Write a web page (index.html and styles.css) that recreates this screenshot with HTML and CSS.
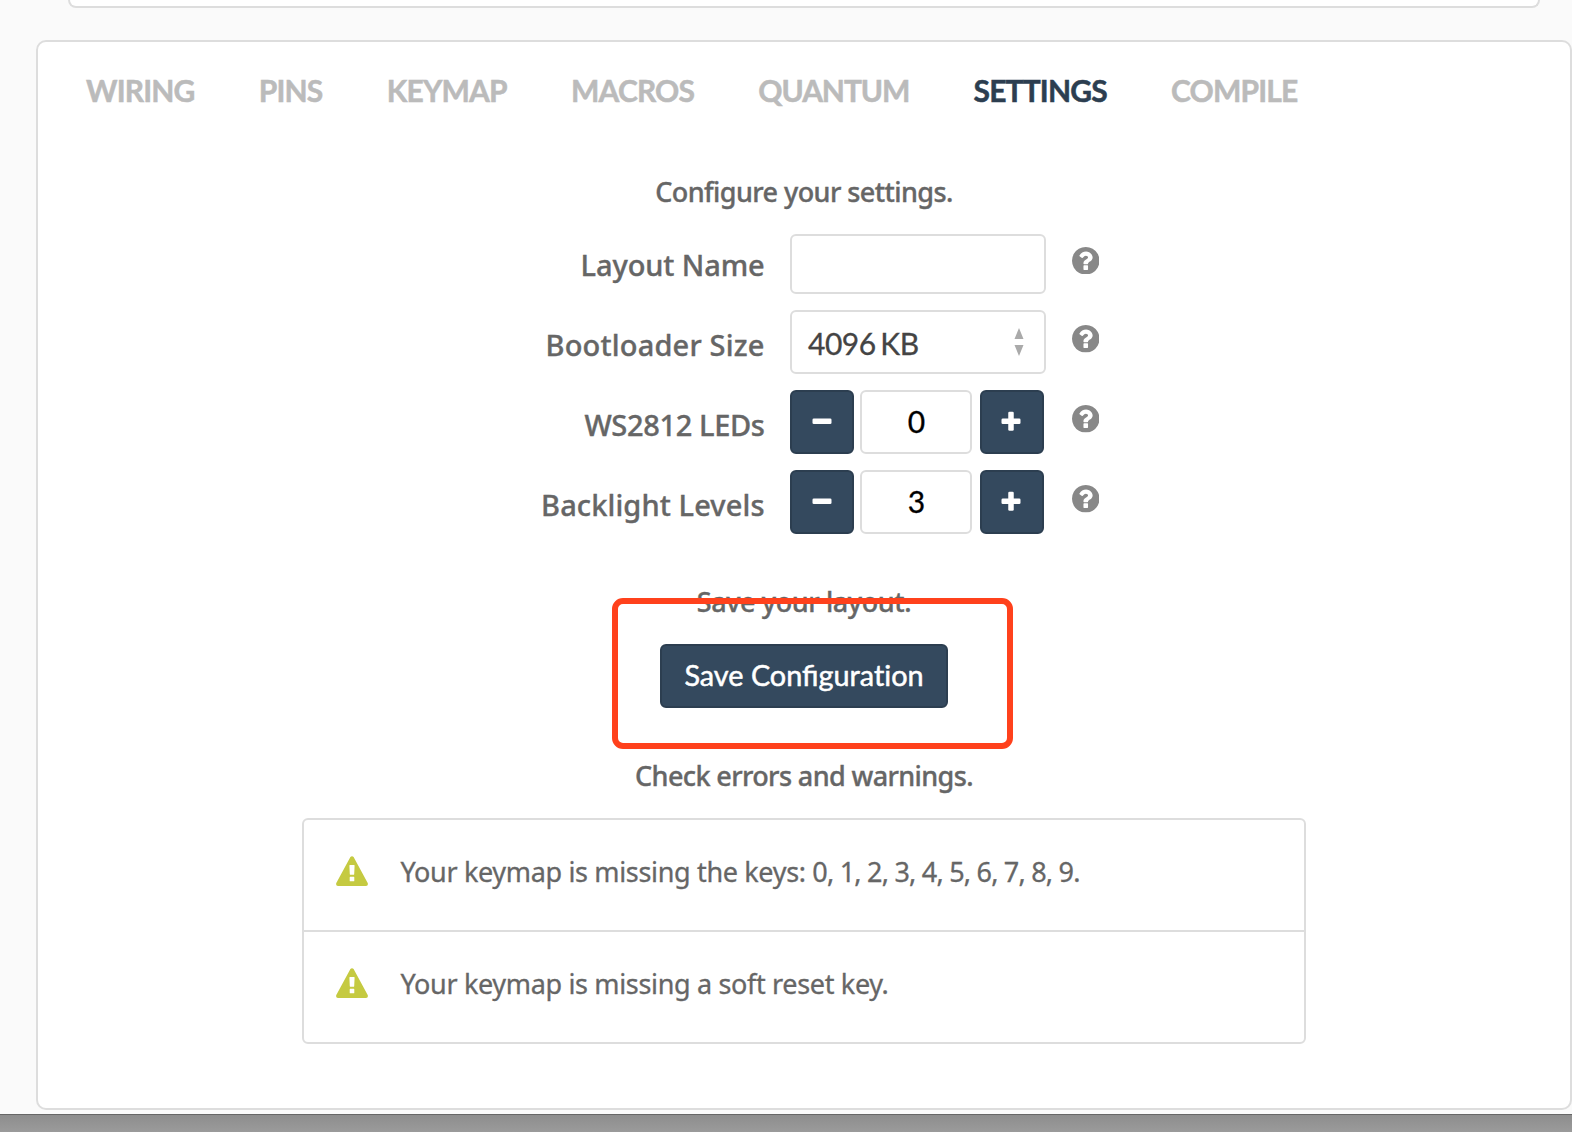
FILE: index.html
```html
<!DOCTYPE html>
<html lang="en">
<head>
<meta charset="utf-8">
<title>Keyboard settings</title>
<link rel="stylesheet" href="styles.css">
</head>
<body>
<svg class="defs" aria-hidden="true">
  <symbol id="help" viewBox="0 0 1536 1536"><path d="M896 1248v-192q0-14-9-23t-23-9h-192q-14 0-23 9t-9 23v192q0 14 9 23t23 9h192q14 0 23-9t9-23zm256-672q0-88-55.500-163t-138.500-116-170-41q-243 0-371 213-15 24 8 42l132 100q7 6 19 6 16 0 25-12 53-68 86-92 34-24 86-24 48 0 85.500 26t37.500 59q0 38-20 61t-68 45q-63 28-115.500 86.500t-52.500 125.500v36q0 14 9 23t23 9h192q14 0 23-9t9-23q0-19 21.500-49.500t54.500-49.500q32-18 49-28.500t46-35 44.500-48 28-60.500 12.500-81zm384 192q0 209-103 385.500t-279.500 279.500-385.500 103-385.500-103-279.500-279.500-103-385.500 103-385.500 279.500-279.500 385.500-103 385.500 103 279.500 279.500 103 385.500z"/></symbol>
  <symbol id="warn" viewBox="0 0 32 30"><path fill-rule="evenodd" d="M14.400 1Q16-.7 17.600 1L31.700 27Q32.500 29.600 30 30H2Q-.5 29.600.3 27ZM13.400 9.400 13.800 18.200Q13.900 18.700 14.500 18.700H17.500Q18.100 18.700 18.200 18.200L18.600 9.400Q18.600 8.900 18 8.900H14Q13.400 8.900 13.400 9.400ZM14.200 20.800Q13.700 20.800 13.700 21.400V24.800Q13.700 25.300 14.200 25.300H17.800Q18.300 25.300 18.300 24.800V21.400Q18.300 20.800 17.800 20.800Z"/></symbol>
  <symbol id="minus" viewBox="0 0 20 20"><rect x=".5" y="7.500" width="19" height="5.500" rx="1.300"/></symbol>
  <symbol id="plus" viewBox="0 0 20 20"><rect x=".5" y="7.500" width="19" height="5.500" rx="1.300"/><rect x="7.250" y=".7" width="5.500" height="19" rx="1.300"/></symbol>
</svg>
<div class="page">
  <section class="panel-above"></section>
  <main class="card">
    <nav class="tabs">
      <a>WIRING</a><a>PINS</a><a>KEYMAP</a><a>MACROS</a><a class="wide">QUANTUM</a><a class="active">SETTINGS</a><a>COMPILE</a>
    </nav>
    <h2 class="heading configure"><span>Configure your settings.</span></h2>
    <form class="form">
      <label class="first">Layout Name</label>
      <div class="field"></div>
      <svg class="help first-help"><use href="#help"/></svg>

      <label class="l-boot">Bootloader Size</label>
      <div class="field select"><span>4096 KB</span>
        <svg class="arrows" viewBox="0 0 10 28"><path d="M5 0 9.500 11H.5ZM5 28 9.500 17H.5Z"/></svg>
      </div>
      <svg class="help"><use href="#help"/></svg>

      <label class="l-led">WS2812 LEDs</label>
      <div class="stepper"><span class="btn"><svg><use href="#minus"/></svg></span><span class="field num">0</span><span class="btn plus"><svg><use href="#plus"/></svg></span></div>
      <svg class="help"><use href="#help"/></svg>

      <label class="l-back">Backlight Levels</label>
      <div class="stepper"><span class="btn"><svg><use href="#minus"/></svg></span><span class="field num">3</span><span class="btn plus"><svg><use href="#plus"/></svg></span></div>
      <svg class="help"><use href="#help"/></svg>
    </form>
    <h2 class="heading save"><span>Save your layout.</span></h2>
    <div class="btn save-btn"><span>Save Configurat&zwnj;ion</span></div>
    <h2 class="heading check"><span>Check errors and warnings.</span></h2>
    <ul class="alerts">
      <li><svg><use href="#warn"/></svg><span>Your keymap is missing the keys: <span class="digits">0, 1, 2, 3, 4, 5, 6, 7, 8, 9.</span></span></li>
      <li><svg><use href="#warn"/></svg><span>Your keymap is missing a soft reset key.</span></li>
    </ul>
  </main>
  <div class="highlight"></div>
  <footer class="edge"></footer>
</div>
</body>
</html>
```
FILE: styles.css
```css
* { box-sizing: border-box; }
body { margin: 0; background: #fafafa; color: #666; font-family: "Noto Sans", sans-serif; }
.defs { display: none; }
.page { position: relative; height: 1132px; overflow: hidden; display: flex; flex-direction: column; }
.panel-above { height: 8px; flex: none; margin: 0 32px 32px 68px; border: 2px solid #ddd; border-top: 0; border-radius: 0 0 8px 8px; background: #fff; }
.card { height: 1070px; flex: none; margin-left: 36px; border: 2px solid #ddd; border-radius: 10px; background: #fff; }
.tabs { display: flex; gap: 64.300px; height: 100px; padding: 0 48px 5px; align-items: center; font: 700 30px/36px Lato, sans-serif; letter-spacing: -.84px; color: #bbb; -webkit-text-stroke: .5px currentColor; }
.tabs .wide { letter-spacing: -1.1px; }
.tabs .active { color: #2c3e50; }
.heading { margin: 0; display: flex; justify-content: center; font-size: 27px; font-weight: 500; line-height: 40px; white-space: nowrap; -webkit-text-stroke: .35px currentColor; }
.configure { padding-top: 30px; height: 92px; letter-spacing: -.57px; }
.form { display: grid; grid-template-columns: 726px 256px 28px; grid-template-rows: 60px 64px 64px 64px; gap: 16px 26px; }
.form label { text-align: right; font-size: 29px; font-weight: 500; line-height: 64px; padding-top: 3px; margin-right: -.6px; white-space: nowrap; -webkit-text-stroke: .35px currentColor; }
.form .first { line-height: 60px; padding-top: 1px; letter-spacing: -.1px; }
.l-boot { letter-spacing: .18px; }
.l-led { letter-spacing: -.35px; }
.l-back { letter-spacing: .1px; }
.help { width: 27.500px; height: 27.500px; margin-top: 15px; margin-left: -.3px; fill: #888; }
.first-help { margin-top: 12.500px; }
.field { border: 2px solid #ddd; border-radius: 6px; background: #fff; font-family: Lato, sans-serif; font-size: 30px; color: #000; }
.select { display: flex; justify-content: space-between; align-items: center; padding: 0 20px 0 16px; color: #444; letter-spacing: -.5px; word-spacing: -2.500px; -webkit-text-stroke: .3px currentColor; }
.select span { padding-top: 1px; }
.arrows { width: 10px; height: 28px; fill: #aaa; stroke: none; }
.stepper { display: flex; }
.btn { display: flex; align-items: center; justify-content: center; width: 64px; height: 64px; border: 2px solid #2c3e50; border-radius: 6px; background: #34495e; color: #fff; fill: #fff; }
.btn svg { width: 20px; height: 20px; margin-bottom: 3px; }
.plus svg { margin-right: 2px; }
.num { width: 112px; height: 64px; margin: 0 8px 0 6px; padding-left: 1px; text-align: center; line-height: 58px; -webkit-text-stroke: .3px currentColor; }
.save { height: 110px; padding-top: 48px; letter-spacing: -.4px; }
.save-btn { width: 288px; margin: 0 auto; padding-bottom: 2px; font: 400 28.800px/58px Lato, sans-serif; -webkit-text-stroke: .5px #fff; white-space: nowrap; }
.check { height: 110px; padding-top: 47.500px; letter-spacing: -.62px; }
.alerts { list-style: none; margin: 0 auto; padding: 0; width: 1004px; height: 226px; border: 2px solid #ddd; border-radius: 6px; font-size: 27px; letter-spacing: -.34px; white-space: nowrap; -webkit-text-stroke: .3px currentColor; }
.alerts li { display: flex; align-items: center; height: 110px; padding: 0 32px 8px; gap: 32.500px; }
.alerts li + li { height: 112px; border-top: 2px solid #ddd; }
.digits { letter-spacing: -.780px; }
.alerts svg { width: 32px; height: 30px; fill: #c5ca41; stroke: none; }
.highlight { position: absolute; left: 611.500px; top: 598px; width: 401px; height: 151px; border: 6px solid #ff411c; border-radius: 11px; }
.edge { height: 18px; flex: none; margin-top: 4px; border-top: 1px solid #666; background: linear-gradient(#8d8d8d, #9b9b9b); }
```
